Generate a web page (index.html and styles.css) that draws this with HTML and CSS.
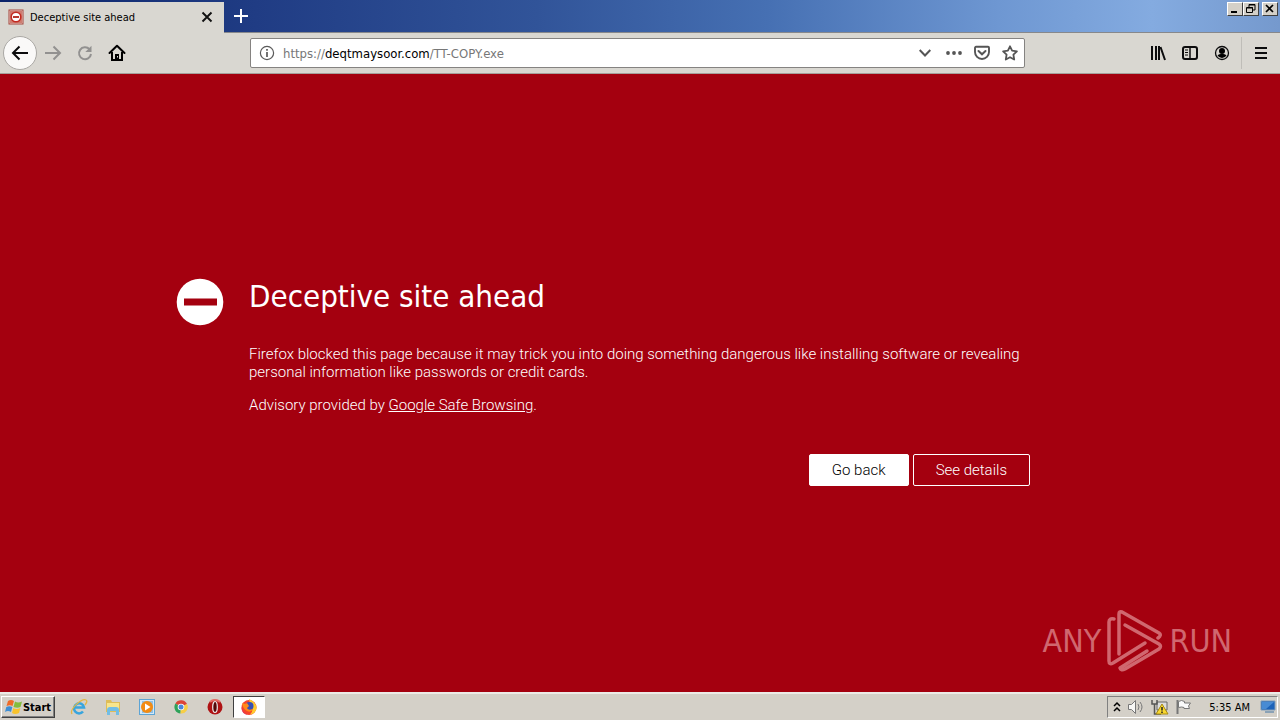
FILE: index.html
```html
<!DOCTYPE html>
<html lang="en">
<head>
<meta charset="utf-8">
<title>Deceptive site ahead</title>
<link rel="stylesheet" href="styles.css">
</head>
<body>
<header class="titlebar">
  <div class="tab">
    <svg class="favicon" viewBox="0 0 16 16" width="16" height="16"><rect x="1" y="1" width="14" height="14" fill="#f3d2cc" stroke="#a4473d"/><rect x="2" y="2" width="12" height="12" fill="#cf7c70"/><circle cx="8" cy="8" r="4.8" fill="#fff" stroke="#c22a20" stroke-width="1.6"/><path d="M5 8h6" stroke="#b7382e" stroke-width="2"/></svg>
    <span class="tab-title">Deceptive site ahead</span>
    <button class="plain tab-close" aria-label="Close tab"><svg width="12" height="12" viewBox="0 0 12 12"><path d="M1.5 1.5l9 9m0-9l-9 9" stroke="#111" stroke-width="1.9" fill="none"/></svg></button>
  </div>
  <button class="plain new-tab" aria-label="New tab"><svg width="16" height="16" viewBox="0 0 16 16"><path d="M8 1v14M1 8h14" stroke="#fff" stroke-width="2"/></svg></button>
  <div class="window-buttons">
    <button class="win" aria-label="Minimize"><svg width="14" height="12" viewBox="0 0 14 12"><path d="M3 9h6" stroke="#000" stroke-width="2"/></svg></button>
    <button class="win" aria-label="Restore"><svg width="14" height="12" viewBox="0 0 14 12"><path d="M5 4V1.5h6V7H9M5 2h6M3 5h6M2.5 4.5h6v5h-6z" stroke="#000" fill="none"/></svg></button>
    <button class="win win-close" aria-label="Close"><svg width="14" height="12" viewBox="0 0 14 12"><path d="M3 2l7 7m0-7l-7 7" stroke="#000" stroke-width="1.7"/></svg></button>
  </div>
</header>
<nav class="toolbar">
  <div class="nav-buttons">
    <button class="back" aria-label="Back"><svg width="18" height="16" viewBox="0 0 18 16"><path d="M17 8H2M8.500 1.500L2 8l6.500 6.500" stroke="#0c0c0d" stroke-width="2" fill="none"/></svg></button>
    <button class="plain tool" aria-label="Forward"><svg width="18" height="16" viewBox="0 0 18 16"><path d="M1 8h15M9.500 1.500L16 8l-6.500 6.500" stroke="#929190" stroke-width="2" fill="none"/></svg></button>
    <button class="plain tool" aria-label="Reload"><svg width="16" height="16" viewBox="0 0 16 16"><path d="M12.500 4.200A6 6 0 1 0 14 9" stroke="#929190" stroke-width="2" fill="none"/><path d="M14.500 .8v6.200H8.300z" fill="#929190"/></svg></button>
    <button class="plain tool" aria-label="Home"><svg width="18" height="18" viewBox="0 0 18 18"><path d="M1.500 9L9 1.800 16.500 9" stroke="#000" stroke-width="2" fill="none" stroke-linecap="round" stroke-linejoin="round"/><path d="M4 8v8h10V8" stroke="#000" stroke-width="2" fill="none"/><path d="M7 16v-6h4v6z"/><path d="M7 16h4" stroke="#000" stroke-width="2"/><path d="M9.500 12v1.500" stroke="#ddd"/></svg></button>
  </div>
  <div class="address">
    <svg width="16" height="16" viewBox="0 0 16 16"><circle cx="8" cy="8" r="6.600" fill="none" stroke="#5a5a5a" stroke-width="1.200"/><path d="M8 7v5M8 4v1.700" stroke="#5a5a5a" stroke-width="1.700"/></svg>
    <div class="url">https://<b>deqtmaysoor.com</b>/TT-COPY.exe</div>
    <button class="plain chevron" aria-label="Show history"><svg width="12" height="8" viewBox="0 0 12 8"><path d="M.7 1L6 6.500 11.300 1" stroke="#555" stroke-width="2" fill="none"/></svg></button>
    <button class="plain" aria-label="Page actions"><svg width="16" height="16" viewBox="0 0 16 16" fill="#555"><circle cx="2" cy="8" r="1.900"/><circle cx="8" cy="8" r="1.900"/><circle cx="14" cy="8" r="1.900"/></svg></button>
    <button class="plain" aria-label="Save to Pocket"><svg width="16" height="16" viewBox="0 0 16 16" fill="none" stroke="#555" stroke-width="1.900"><path d="M2 1.800h12a1 1 0 0 1 1 1V7a7 7 0 0 1-14 0V2.800a1 1 0 0 1 1-1z"/><path d="M4.500 6L8 9.300 11.500 6" stroke-linecap="round" stroke-width="2"/></svg></button>
    <button class="plain" aria-label="Bookmark"><svg width="16" height="16" viewBox="0 0 16 16" fill="none" stroke="#555" stroke-width="1.800" stroke-linejoin="round"><path d="M8 1.300l2.100 4.300 4.800.7-3.500 3.400.8 4.800L8 12.200l-4.200 2.300.8-4.800L1.100 6.300l4.800-.7z"/></svg></button>
  </div>
  <div class="menu-buttons">
    <button class="plain tool" aria-label="Library"><svg width="16" height="16" viewBox="0 0 16 16" stroke="#0c0c0d" stroke-width="2"><path d="M2 1v14M6 1v14M9 1v14M10.500 2l4.500 13"/></svg></button>
    <button class="plain tool" aria-label="Sidebars"><svg width="16" height="16" viewBox="0 0 16 16" stroke="#0c0c0d" fill="none"><rect x="1" y="2" width="14" height="12" rx="2" stroke-width="2"/><path d="M8 2v12" stroke-width="1.500"/><path d="M3 5h3M3 7.500h3M3 10h3"/></svg></button>
    <button class="plain tool" aria-label="Account"><svg width="16" height="16" viewBox="0 0 16 16"><circle cx="8" cy="8" r="6.500" fill="none" stroke="#0c0c0d" stroke-width="1.300"/><circle cx="8" cy="6" r="3"/><path d="M3.500 10.200c2-1.500 7-1.500 9 0a5 5 0 0 1-9 0z"/></svg></button>
    <button class="plain tool app-menu" aria-label="Open menu"><svg width="14" height="14" viewBox="0 0 14 14"><path d="M1 2h12M1 7h12M1 12h12" stroke="#0c0c0d" stroke-width="2"/></svg></button>
  </div>
</nav>
<main class="page">
  <section class="warning">
    <svg class="stop" width="48" height="48" viewBox="0 0 48 48"><circle cx="24" cy="24" r="23.300" fill="#fff"/><path d="M8 24h33" stroke="#a4000f" stroke-width="7"/></svg>
    <div class="message">
      <h1>Deceptive site ahead</h1>
      <p>Firefox blocked this page because it may trick you into doing something dangerous like installing software or revealing personal information like passwords or credit cards.</p>
      <p>Advisory provided by <a href="#">Google Safe Browsing</a>.</p>
      <div class="actions"><button class="action primary">Go back</button><button class="action">See details</button></div>
    </div>
  </section>
  <div class="watermark">
    <span>ANY</span>
    <svg width="56" height="62" viewBox="0 0 56 62" fill="none" stroke="#d0676f" stroke-width="3.500" stroke-linejoin="round" stroke-linecap="round"><path d="M7 9Q2 8 2 12v39q0 4 4 2l32-20"/><path d="M12 44V4q0-3 3-2l37 21q3 2-1 5"/><path d="M18 15l34 19q3 2 0 5L18 59q-4 2-5-1l27-17"/></svg>
    <span>RUN</span>
  </div>
</main>
<footer class="taskbar">
  <button class="start"><svg width="18" height="16" viewBox="0 0 18 16"><path d="M3 2q3-2 6 0L7.500 7Q5 5.500 1.500 7z" fill="#ef6b27"/><path d="M10 2.500q3 2 7 0L15.500 8q-3 1.500-7 0z" fill="#83bd3d"/><path d="M1.300 8q3-1.500 6 0L6 13q-3-2-6 0z" fill="#3d8ed4"/><path d="M8.300 9q3 2 7 0L14 14q-4 2-7 0z" fill="#f8c32c"/></svg>Start</button>
  <div class="launchers">
    <button class="plain launch" aria-label="Internet Explorer"><svg width="18" height="18" viewBox="0 0 18 18" fill="none"><path d="M5 9.500h9a5 5 0 1 0-1 4" stroke="#39a5dd" stroke-width="2.500"/><path d="M2 16C-1 11 12 0 16 2q2 1-1 5" stroke="#e3b644" stroke-width="1.300"/></svg></button>
    <button class="plain launch" aria-label="Explorer"><svg width="18" height="18" viewBox="0 0 18 18"><path d="M2 2h5l1 2h8v10H2z" fill="#dfbd58"/><path d="M3 5h12v7H3z" fill="#f8e58c"/><path d="M3 17v-5q0-3 3-3h6q3 0 3 3v5h-3v-4H6v4z" fill="#72bde5"/></svg></button>
    <button class="plain launch" aria-label="Media Player"><svg width="18" height="18" viewBox="0 0 18 18"><rect x="1.500" y="1.500" width="15" height="15" fill="#d2e8f8" stroke="#5da4d5"/><rect x="4" y="3" width="11" height="12" fill="#8fc0e6"/><circle cx="9" cy="9" r="6" fill="#f28b13"/><path d="M7 5.500L12.500 9 7 12.500z" fill="#fff"/></svg></button>
    <button class="plain launch" aria-label="Chrome"><svg width="18" height="18" viewBox="0 0 18 18"><path d="M9 9L3.400 5.500A6.500 6.500 0 0 1 15 6z" fill="#dc4437"/><path d="M9 9L3.400 5.500A6.500 6.500 0 0 0 8.500 15.500z" fill="#2fa25a"/><path d="M9 9l6-3a6.500 6.500 0 0 1-6.500 9.500z" fill="#f7ce45"/><circle cx="9" cy="9" r="3.300" fill="#fff"/><circle cx="9" cy="9" r="2.500" fill="#4b87da"/></svg></button>
    <button class="plain launch" aria-label="Opera"><svg width="18" height="18" viewBox="0 0 18 18"><circle cx="9" cy="9" r="7.500" fill="#af1214"/><path d="M4 4a7 7 0 0 1 10 0" stroke="#e46a64" stroke-width="2" fill="none"/><ellipse cx="9" cy="9" rx="2.300" ry="5.500" fill="#540809" stroke="#eee" stroke-width="1.200"/></svg></button>
  </div>
  <button class="running" aria-label="Firefox"><svg width="18" height="18" viewBox="0 0 18 18"><circle cx="9" cy="9.500" r="7.500" fill="#f6452c"/><path d="M9 1c5 2 8 6 7.500 10Q15 16 10 16.500q5-5 0-11z" fill="#ffcb2d"/><circle cx="9.500" cy="8" r="4" fill="#3850b5"/><path d="M2 5l3 1 2-1 2 3-2 2q1 3 6 1-2 4-6 2-4-2-5-8z" fill="#ff8a18"/><path d="M2 9q0 6 6 7.500-6 0-6.500-6z" fill="#df2b51"/></svg></button>
  <div class="tray">
    <svg class="more" width="8" height="12" viewBox="0 0 8 12"><path d="M1 5l3-3 3 3M1 10l3-3 3 3" stroke="#000" stroke-width="1.500" fill="none"/></svg>
    <svg width="18" height="16" viewBox="0 0 18 16" fill="#f7f7f5" stroke="#777"><path d="M1.500 5.500h3l4-4v13l-4-4h-3z"/><path d="M11 5q2 3 0 6M13 3q4 5 0 10" fill="none"/></svg>
    <svg width="18" height="16" viewBox="0 0 18 16"><path d="M6 3h10v8H6z" fill="#ddd" stroke="#666"/><path d="M1 1v4h5V1M3.500 5v10H10" stroke="#555" fill="none" stroke-width="1.500"/><path d="M11 5l6 10H5z" fill="#f9d82f" stroke="#a88b12"/><path d="M11 8v3.500M11 12.500V14" stroke="#222" stroke-width="1.500"/></svg>
    <svg width="18" height="16" viewBox="0 0 18 16"><path d="M2.500 1v14" stroke="#777" stroke-width="2"/><path d="M3.500 2.500q3-2 6 0v1.500h6l-2 3 1 2.500H9V8.500q-2-1-5.500 0z" fill="#fafafa" stroke="#777"/></svg>
    <time>5:35 AM</time>
    <svg width="16" height="16" viewBox="0 0 16 16"><path d="M1 2h14v9H1z" fill="#1c62b8" stroke="#7e9dbb"/><path d="M2 3h12L6 10H2z" fill="#488bd4"/><path d="M5 13h9" stroke="#8aa2b6" stroke-width="2"/></svg>
  </div>
</footer>
</body>
</html>
```
FILE: styles.css
```css
* { box-sizing: border-box; }
html, body { height: 100%; }
body {
  margin: 0;
  display: flex;
  flex-direction: column;
  background: #d9d7d1;
  font-family: "DejaVu Sans Condensed", "DejaVu Sans", sans-serif;
  font-size: 11px;
}
button { font: inherit; color: inherit; padding: 0; }
svg { display: block; flex: none; }
.plain { background: none; border: 0; }
.titlebar {
  height: 33px;
  display: flex;
  align-items: center;
  padding-right: 2px;
  background: linear-gradient(90deg, #0b246a 0%, #203c84 20%, #315499 42%, #4670b3 60%, #6e97d2 78%, #84abe0 90%, #7599cd 100%);
  border-bottom: 1px solid #87888b;
}
.tab {
  width: 224px;
  height: 31px;
  margin-top: 2px;
  padding: 0 10px 0 8px;
  display: flex;
  align-items: center;
  gap: 6px;
  background: #d9d7d1;
}
.tab-title { flex: 1; }
.tab-close { width: 14px; height: 14px; display: grid; place-items: center; }
.new-tab { width: 34px; height: 32px; display: grid; place-items: center; }
.window-buttons { display: flex; align-self: flex-start; margin: 2px 0 0 auto; }
.win {
  width: 16px;
  height: 14px;
  background: #d4d0c8;
  border: 1px solid;
  border-color: #fff #404040 #404040 #fff;
}
.win-close { margin-left: 3px; }
.toolbar {
  height: 41px;
  display: grid;
  grid-template-columns: 250fr minmax(300px, 775px) 255fr;
  align-items: center;
  border-bottom: 1px solid #a5a09b;
}
.nav-buttons, .menu-buttons { display: flex; align-items: center; }
.nav-buttons { padding-left: 3px; }
.back {
  width: 34px;
  height: 34px;
  display: grid;
  place-items: center;
  border: 1px solid #aaa8a4;
  border-radius: 50%;
  background: #faf9f8;
}
.tool { width: 32px; height: 32px; display: grid; place-items: center; }
.menu-buttons { justify-content: flex-end; padding-right: 1px; }
.app-menu { width: 38px; border-left: 1px solid #bfbdb8; margin-left: 3px; }
.address {
  height: 30px;
  padding: 0 6px 0 8px;
  display: flex;
  align-items: center;
  gap: 12px;
  background: #fff;
  border: 1px solid #858381;
  border-radius: 2px;
}
.url { flex: 1; margin-left: -4px; font-size: 13px; color: #777; }
.url b { font-weight: 400; color: #000; }
.chevron { margin-right: 3px; }
.page {
  flex: 1;
  position: relative;
  display: grid;
  align-items: center;
  padding-bottom: 2px;
  background: #a4000f;
  color: #fff;
}
.warning {
  display: grid;
  grid-template-columns: 73px minmax(0, 781px) 74px;
  justify-content: center;
}
.message { font-family: Roboto, "Noto Sans", sans-serif; font-weight: 300; font-size: 15px; line-height: 18px; }
h1 {
  margin: 0 0 30px;
  font-family: "DejaVu Sans Condensed", "DejaVu Sans", sans-serif;
  font-size: 31px;
  line-height: 37px;
  font-weight: 400;
}
p { margin: 0 0 15px; }
a { color: inherit; }
.actions { display: flex; justify-content: flex-end; gap: 4px; margin-top: 40px; }
.action {
  height: 32px;
  min-width: 100px;
  padding: 0 22px;
  background: transparent;
  border: 1px solid #fff;
  border-radius: 2px;
}
.primary { background: #fff; color: #000; }
.watermark {
  position: absolute;
  right: 48px;
  bottom: 20px;
  display: flex;
  align-items: center;
  gap: 6px;
  color: #d0676f;
  font-size: 32px;
}
.taskbar {
  height: 28px;
  padding: 0 2px 0 1px;
  display: flex;
  align-items: center;
  background: #d4d0c8;
  border-top: 2px solid #eceae6;
}
.start {
  width: 54px;
  height: 22px;
  display: flex;
  align-items: center;
  justify-content: center;
  background: #d4d0c8;
  border: 1px solid;
  border-color: #fff #404040 #404040 #fff;
  box-shadow: inset -1px -1px #808080;
  font-weight: 700;
}
.launchers { display: flex; gap: 16px; margin: 0 9px 0 15px; }
.launch { width: 18px; height: 18px; }
.running {
  width: 32px;
  height: 22px;
  display: grid;
  place-items: center;
  background: #fff;
  border: 1px solid;
  border-color: #404040 #fff #fff #404040;
}
.tray {
  height: 22px;
  margin-left: auto;
  padding: 0 1px 0 5px;
  display: flex;
  align-items: center;
  gap: 6px;
  border: 1px solid;
  border-color: #808080 #fff #fff #808080;
}
.tray time { margin: 0 4px 0 10px; }
```
